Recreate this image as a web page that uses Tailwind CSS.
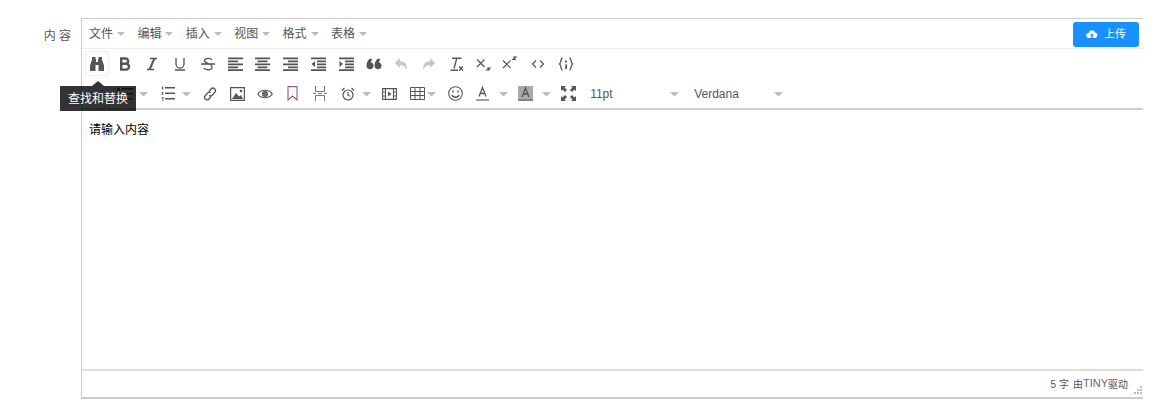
<!DOCTYPE html>
<html lang="zh-CN">
<head>
    <meta charset="UTF-8">
    <meta name="viewport" content="width=device-width, initial-scale=1.0">
    <title>内容编辑器</title>
    <script src="https://cdn.jsdelivr.net/npm/@tailwindcss/browser@4"></script>
</head>
<body class="bg-white h-[408px] overflow-hidden font-['Liberation_Sans','Noto_Sans_CJK_SC',sans-serif] text-xs text-[#555]">
<div class="flex pt-[18px]">
    <div class="w-[81px] shrink-0 pt-[11px] pr-[10px] text-right leading-[14px] text-[#555]">内 容</div>

    <div class="relative w-[1062px] h-[381px] flex flex-col border-t border-l border-b-2 border-[#ccc]">
        <!-- menu bar -->
        <div class="h-[30px] flex items-center pt-[1px] pl-[7px] pr-[4px] border-b border-[#eee]">
            <div class="w-[48.4px] flex items-center shrink-0">文件<span class="ml-[4px] border-x-[4px] border-t-[4px] border-x-transparent border-t-[#bbb]"></span></div>
            <div class="w-[48.4px] flex items-center shrink-0">编辑<span class="ml-[4px] border-x-[4px] border-t-[4px] border-x-transparent border-t-[#bbb]"></span></div>
            <div class="w-[48.4px] flex items-center shrink-0">插入<span class="ml-[4px] border-x-[4px] border-t-[4px] border-x-transparent border-t-[#bbb]"></span></div>
            <div class="w-[48.4px] flex items-center shrink-0">视图<span class="ml-[4px] border-x-[4px] border-t-[4px] border-x-transparent border-t-[#bbb]"></span></div>
            <div class="w-[48.4px] flex items-center shrink-0">格式<span class="ml-[4px] border-x-[4px] border-t-[4px] border-x-transparent border-t-[#bbb]"></span></div>
            <div class="w-[48.4px] flex items-center shrink-0">表格<span class="ml-[4px] border-x-[4px] border-t-[4px] border-x-transparent border-t-[#bbb]"></span></div>
            <button class="ml-auto w-[66px] h-[25px] flex items-center justify-center gap-[6px] rounded-[3px] bg-[#1890ff] text-white text-[11px]">
                <svg class="w-[12px] h-[12px]" viewBox="0 0 12 12" fill="#fff"><path d="M3 10a2.5 2.5 0 0 1-.4-5A3.5 3.5 0 0 1 9.300 4.500 2.800 2.800 0 0 1 9 10H6.700V7.500H8L6 5.500 4 7.500h1.300V10z"/></svg>
                上传
            </button>
        </div>

        <!-- toolbar -->
        <div class="h-[61px] flex flex-col border-b-2 border-[#ccc]">
            <div class="h-[29px] flex items-center pl-[1px] shrink-0">
                <span class="w-[27.7px] h-[25px] flex items-center justify-center shrink-0"><span class="w-[24px] h-[25px] flex items-center justify-center border border-[#eee]"><svg class="w-[16px] h-[16px]" viewBox="0 0 16 16" fill="#555"><path d="M3 1h3.500v2H7v3h2V3h.5V1H13v2.500l2 6V15H9.500V9H6.500v6H1V9.500l2-6z"/></svg></span></span>
                <span class="w-[27.7px] flex justify-center shrink-0"><svg class="w-[14px] h-[14px]" viewBox="0 0 14 14" fill="none" stroke="#555" stroke-width="2.400"><path d="M3.200 1.500h4.300a2.600 2.600 0 0 1 0 5.300H3.200zM3.200 6.800h4.900a2.900 2.900 0 0 1 0 5.800H3.200z"/></svg></span>
                <span class="w-[27.7px] flex justify-center shrink-0"><svg class="w-[14px] h-[14px]" viewBox="0 0 14 14" fill="none" stroke="#555"><path d="M5 1.500h7M2 12.500h7" stroke-width="1.400"/><path d="M9.500 1.500 4.500 12.500" stroke-width="2"/></svg></span>
                <span class="w-[27.7px] flex justify-center shrink-0"><svg class="w-[14px] h-[14px]" viewBox="0 0 14 14" fill="none" stroke="#555" stroke-width="1.300"><path d="M3 1v6a4 4 0 0 0 8 0V1M2 13h10"/></svg></span>
                <span class="w-[27.7px] flex justify-center shrink-0"><svg class="w-[14px] h-[14px]" viewBox="0 0 14 14" fill="none" stroke="#555" stroke-width="1.300"><path d="M11 3C10 1 4 .5 3.500 3.500S11 6 11 10s-7 3-8 1M0 7h14"/></svg></span>
                <span class="w-[27.7px] flex justify-center shrink-0"><svg class="w-[15px] h-[14px]" viewBox="0 0 15 14" fill="#555"><path d="M0 .5h15v1.800H0zM0 3.500h10v1.800H0zM0 6.500h15v1.800H0zM0 9.500h10v1.800H0zM0 12.200h15V14H0z"/></svg></span>
                <span class="w-[27.7px] flex justify-center shrink-0"><svg class="w-[15px] h-[14px]" viewBox="0 0 15 14" fill="#555"><path d="M0 .5h15v1.800H0zM2.500 3.500h10v1.800h-10zM0 6.500h15v1.800H0zM2.500 9.500h10v1.800h-10zM0 12.200h15V14H0z"/></svg></span>
                <span class="w-[27.7px] flex justify-center shrink-0"><svg class="w-[15px] h-[14px]" viewBox="0 0 15 14" fill="#555"><path d="M0 .5h15v1.800H0zM5 3.500h10v1.800H5zM0 6.500h15v1.800H0zM5 9.500h10v1.800H5zM0 12.200h15V14H0z"/></svg></span>
                <span class="w-[27.7px] flex justify-center shrink-0"><svg class="w-[15px] h-[14px]" viewBox="0 0 15 14" fill="#555"><path d="M0 .5h15v1.800H0zM6 3.500h9v1.800H6zM6 6.500h9v1.800H6zM6 9.500h9v1.800H6zM0 12.200h15V14H0zM4 4v6L.5 7z"/></svg></span>
                <span class="w-[27.7px] flex justify-center shrink-0"><svg class="w-[15px] h-[14px]" viewBox="0 0 15 14" fill="#555"><path d="M0 .5h15v1.800H0zM6 3.500h9v1.800H6zM6 6.500h9v1.800H6zM6 9.500h9v1.800H6zM0 12.200h15V14H0zM.5 4v6L4 7z"/></svg></span>
                <span class="w-[27.7px] flex justify-center shrink-0"><svg class="w-[16px] h-[14px]" viewBox="0 0 16 14" fill="#555"><path d="M4 1.500 6.500 2.500C5.500 3.500 5 4.300 5 5.300A3.500 3.500 0 1 1 .5 8.500C.5 5.500 2 3 4 1.500zM12 1.500 14.500 2.500C13.500 3.500 13 4.300 13 5.300A3.500 3.500 0 1 1 8.500 8.500C8.500 5.500 10 3 12 1.500z"/></svg></span>
                <span class="w-[27.7px] flex justify-center shrink-0"><svg class="w-[14px] h-[14px]" viewBox="0 0 14 14" fill="#c8c8c8"><path d="M6 1v3.200c4 .1 6.800 2.300 6.800 6.300 0 1-.1 2-.5 2.500-.3-3-2.800-4.800-6.300-4.800V11L.7 6z"/></svg></span>
                <span class="w-[27.7px] flex justify-center shrink-0"><svg class="w-[14px] h-[14px]" viewBox="0 0 14 14" fill="#c8c8c8"><path d="M8 1v3.200c-4 .1-6.800 2.300-6.800 6.300 0 1 .1 2 .5 2.500.3-3 2.800-4.800 6.300-4.800V11l5.300-5z"/></svg></span>
                <span class="w-[27.7px] flex justify-center shrink-0"><svg class="w-[16px] h-[16px]" viewBox="0 0 16 16" fill="none" stroke="#555" stroke-width="1.400"><path d="M3 2.200h9.500M7.800 2.200 5 12.500M1.500 14.300h7.500M10 10.500l4 4M14 10.500l-4 4"/></svg></span>
                <span class="w-[25px] flex justify-center shrink-0"><svg class="w-[15px] h-[15px]" viewBox="0 0 15 15" fill="none" stroke="#555" stroke-width="1.200"><path d="M1 3.500l7.500 7.500M8.500 3.500 1 11M11 12h3l-3 2h3"/></svg></span>
                <span class="w-[28px] flex justify-center shrink-0"><svg class="w-[15px] h-[15px]" viewBox="0 0 15 15" fill="none" stroke="#555" stroke-width="1.200"><path d="M1 4.500 8.500 12M8.500 4.500 1 12M11 1h3l-3 2.500h3"/></svg></span>
                <span class="w-[28px] flex justify-center shrink-0"><svg class="w-[14px] h-[14px]" viewBox="0 0 14 14" fill="none" stroke="#555" stroke-width="1.200"><path d="M5 3.500 1.500 7 5 10.500M9 3.500 12.500 7 9 10.500"/></svg></span>
                <span class="w-[28px] flex justify-center shrink-0"><svg class="w-[16px] h-[14px]" viewBox="0 0 16 14" fill="none" stroke="#555" stroke-width="1.300"><path d="M4.500 1C2.500 1 3.500 6 1.500 7c2 1 1 6 3 6M11.500 1C13.500 1 12.500 6 14.500 7c-2 1-1 6-3 6"/><path d="M8 3.500v2M8.200 7.500v2.500L7.500 12" stroke-width="1.800"/></svg></span>
            </div>

            <div class="h-[29px] mt-[1px] flex items-center pl-[1px] shrink-0">
                <span class="w-[27.7px] shrink-0"></span>
                <span class="w-[28px] flex justify-center shrink-0"><svg class="w-[16px] h-[14px]" viewBox="0 0 16 14" fill="#555"><circle cx="1.500" cy="2" r="1.500"/><path d="M5 1h11v1.500H5zM5 6h11v1.500H5zM5 11h11v1.500H5z"/></svg></span>
                <span class="w-[9px] mr-[12px] border-x-[4px] border-t-[4px] border-x-transparent border-t-[#bbb] shrink-0"></span>
                <span class="w-[16px] flex justify-center shrink-0"><svg class="w-[14px] h-[15px]" viewBox="0 0 14 15" fill="#555"><path d="M4 1h10v1.500H4zM4 6.500h10V8H4zM4 12h10v1.500H4zM1 .5h1.200v3H1zM.5 6h2v.8l-1 1.500h1v.7h-2v-.7l1-1.500h-1zM.5 11h2v3.500h-2v-.7h1.200v-.7H1v-.6h.7v-.7H.5z"/></svg></span>
                <span class="w-[9px] ml-[6px] mr-[12px] border-x-[4px] border-t-[4px] border-x-transparent border-t-[#bbb] shrink-0"></span>
                <span class="w-[14px] mr-[13.7px] flex justify-center shrink-0"><svg class="w-[16px] h-[16px] shrink-0" viewBox="0 0 16 16" fill="none" stroke="#555" stroke-width="1.300"><path d="M7 5.500l2-2.500a2.500 2.500 0 0 1 3.800 3.300L10.500 9a2.300 2.300 0 0 1-3.200.2M9 10.500l-2 2.500a2.500 2.500 0 0 1-3.800-3.300L5.500 7a2.300 2.300 0 0 1 3.200-.2"/></svg></span>
                <span class="w-[14px] mr-[13.7px] flex justify-center shrink-0"><svg class="w-[15px] h-[14px] shrink-0" viewBox="0 0 15 14"><path d="M.6.6h13.800v12.800H.6z" fill="none" stroke="#555" stroke-width="1.200"/><path d="M2 12l4-6 3 3.500L11 8l2 4z" fill="#555"/><circle cx="11" cy="4" r="1.300" fill="#555"/></svg></span>
                <span class="w-[14px] mr-[13.7px] flex justify-center shrink-0"><svg class="w-[16px] h-[12px] shrink-0" viewBox="0 0 16 12" fill="none" stroke="#555" stroke-width="1.200"><path d="M.7 6C4 1 12 1 15.300 6 12 11 4 11 .7 6z"/><circle cx="8" cy="6" r="2.400" fill="#777"/></svg></span>
                <span class="w-[14px] mr-[13.7px] flex justify-center shrink-0"><svg class="w-[11px] h-[15px] shrink-0" viewBox="0 0 11 15" fill="none" stroke="#9c5a8c" stroke-width="1.100"><path d="M1 .6h9v13.400L5.500 10 1 14z"/></svg></span>
                <span class="w-[14px] mr-[13.7px] flex justify-center shrink-0"><svg class="w-[14px] h-[15px] shrink-0" viewBox="0 0 14 15" fill="none" stroke="#777" stroke-width="1"><path d="M2.500 0v5.500h9V0M2.500 15V9.500h9V15M0 7.500h3M5 7.500h4M11 7.500h3"/></svg></span>
                <span class="w-[14px] flex justify-center shrink-0"><svg class="w-[14px] h-[14px] shrink-0" viewBox="0 0 14 14" fill="none" stroke="#555" stroke-width="1.200"><circle cx="7" cy="8" r="5"/><path d="M7 5v3.200l2 1M1 3.500 3.500 1M13 3.500 10.500 1"/></svg></span>
                <span class="w-[9px] ml-[7px] mr-[11px] border-x-[4px] border-t-[4px] border-x-transparent border-t-[#bbb] shrink-0"></span>
                <span class="w-[15px] mr-[13px] flex justify-center shrink-0"><svg class="w-[15px] h-[12px] shrink-0" viewBox="0 0 15 12"><path d="M.6.6h13.800v10.800H.6zM3.500.6v10.800M11.500.6v10.800M.6 4h2.900M.6 8h2.900M11.500 4h2.900M11.500 8h2.900" fill="none" stroke="#555" stroke-width="1.100"/><path d="M6 3.500 9.500 6 6 8.500z" fill="#555"/></svg></span>
                <span class="w-[15px] flex justify-center shrink-0"><svg class="w-[15px] h-[13px] shrink-0" viewBox="0 0 15 13" fill="none" stroke="#555" stroke-width="1"><path d="M.5.5h14v12H.5zM.5 4.500h14M.5 8.500h14M5 .5v12M10 .5v12"/></svg></span>
                <span class="w-[9px] ml-[2px] mr-[12px] border-x-[4px] border-t-[4px] border-x-transparent border-t-[#bbb] shrink-0"></span>
                <span class="w-[15px] mr-[12px] flex justify-center shrink-0"><svg class="w-[15px] h-[15px] shrink-0" viewBox="0 0 15 15" fill="none" stroke="#555" stroke-width="1.100"><circle cx="7.500" cy="7.500" r="6.800"/><path d="M4 9c1 3 6 3 7 0" stroke-width="1.400"/><path d="M5 4.500v2M10 4.500v2" stroke-width="1.400"/></svg></span>
                <span class="w-[15px] flex justify-center shrink-0"><svg class="w-[15px] h-[15px] shrink-0" viewBox="0 0 15 15" fill="none" stroke="#555" stroke-width="1.300"><path d="M4 10.500 7.500 1.500l3.500 9M5 7.500h5"/><path d="M1 14h13" stroke="#888" stroke-width="1.600"/></svg></span>
                <span class="w-[9px] ml-[9px] mr-[10px] border-x-[4px] border-t-[4px] border-x-transparent border-t-[#bbb] shrink-0"></span>
                <span class="w-[15px] flex justify-center shrink-0"><svg class="w-[15px] h-[15px] shrink-0" viewBox="0 0 15 15"><path d="M0 0h15v15H0z" fill="#aaa"/><path d="M4 11 7.500 2l3.500 9M5 8h5" fill="none" stroke="#555" stroke-width="1.300"/><path d="M0 14h15" stroke="#777" stroke-width="1.600"/></svg></span>
                <span class="w-[9px] ml-[9px] mr-[10px] border-x-[4px] border-t-[4px] border-x-transparent border-t-[#bbb] shrink-0"></span>
                <span class="w-[15px] shrink-0"><svg class="w-[15px] h-[15px]" viewBox="0 0 15 15" fill="#555"><path d="M0 0h5L3.500 1.500 6 4 4 6 1.500 3.500 0 5zM15 0v5l-1.500-1.500L11 6 9 4l2.500-2.500L10 0zM0 15v-5l1.500 1.500L4 9l2 2-2.500 2.500L5 15zM15 15h-5l1.500-1.500L9 11l2-2 2.500 2.500L15 10z"/></svg></span>
                <span class="w-[80px] ml-[14px] leading-none shrink-0">11pt</span>
                <span class="w-[9px] mr-[15px] border-x-[4px] border-t-[4px] border-x-transparent border-t-[#bbb] shrink-0"></span>
                <span class="w-[80px] leading-none shrink-0">Verdana</span>
                <span class="w-[9px] border-x-[4px] border-t-[4px] border-x-transparent border-t-[#bbb] shrink-0"></span>
            </div>
        </div>

        <!-- content -->
        <div class="flex-1 pl-[7px] pt-[13px] text-black leading-[14px]">请输入内容</div>

        <!-- status bar -->
        <div class="relative h-[28px] flex items-center justify-end pt-[1px] pr-[15px] border-t-2 border-[#ddd] text-[10px] text-[#555]">
            <span>5 字</span><span class="ml-[4px]">由<span class="relative top-[-1px] text-[11px] text-[#667]">TINY</span>驱动</span>
            <svg class="absolute right-[1px] bottom-[3px] w-[9px] h-[9px]" viewBox="0 0 9 9" fill="#bbb"><path d="M7 1h2v2H7zM4 4h2v2H4zM7 4h2v2H7zM1 7h2v2H1zM4 7h2v2H4zM7 7h2v2H7z"/></svg>
        </div>

        <!-- tooltip -->
        <div class="absolute left-[-22px] top-[62px] flex flex-col items-center">
            <span class="border-x-[6px] border-b-[5px] border-x-transparent border-b-black/80"></span>
            <span class="w-[76px] h-[25px] flex items-center justify-center bg-black/80 text-white text-xs">查找和替换</span>
        </div>
    </div>
</div>
</body>
</html>
